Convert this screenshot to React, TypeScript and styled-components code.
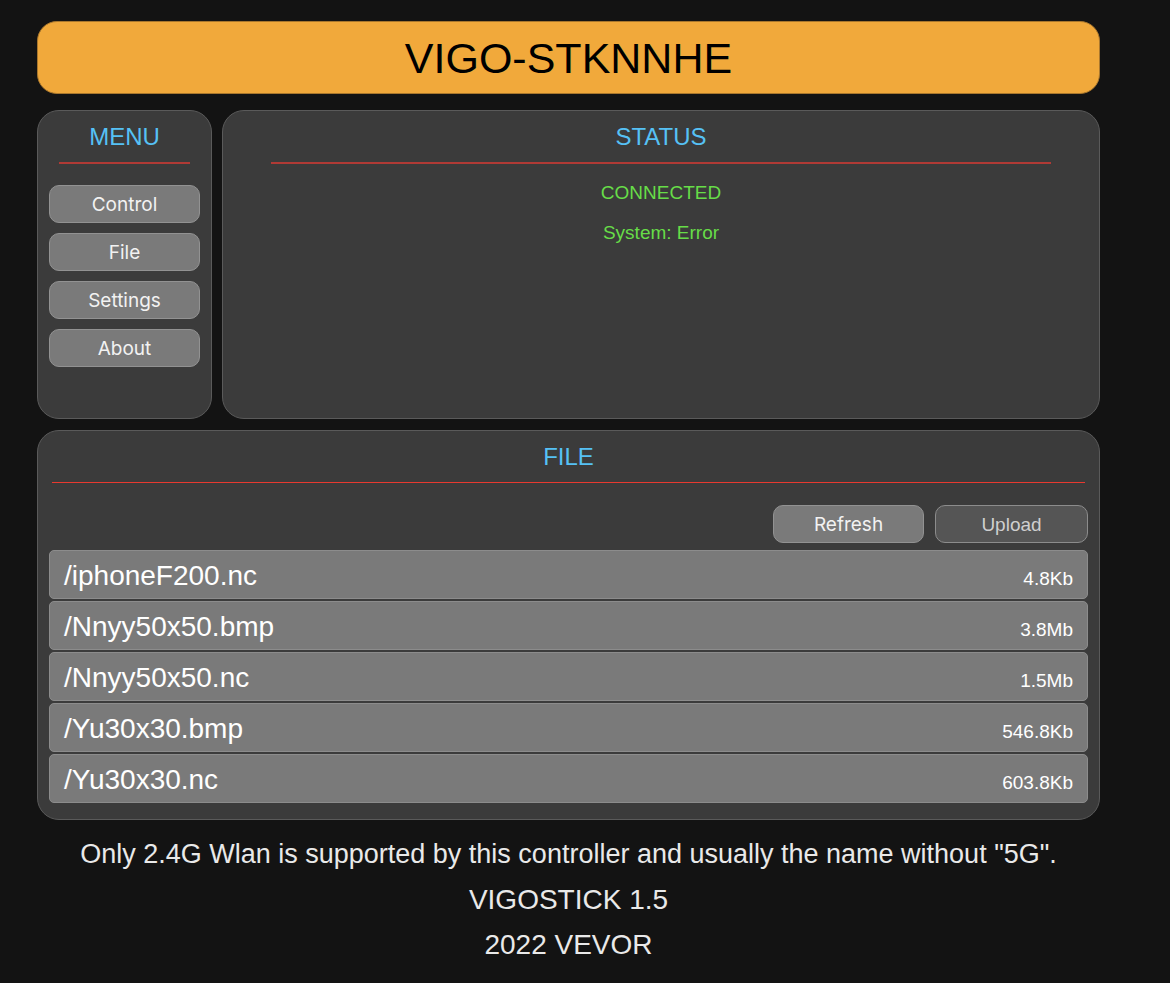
import React from "react";
import styled, { createGlobalStyle } from "styled-components";

const GlobalStyle = createGlobalStyle`
  *, *::before, *::after { box-sizing: border-box; }
  body {
    margin: 0;
    background: #131313;
    color: #e9e9e9;
    font-family: "Liberation Sans", Arial, sans-serif;
  }
  h1, h2, p, ul { margin: 0; padding: 0; font-weight: 400; }
`;

const Page = styled.div`
  display: flex;
  flex-direction: column;
  padding: 21px 70px 16px 37px;
`;

const Banner = styled.header`
  display: flex;
  align-items: center;
  justify-content: center;
  height: 73px;
  margin-bottom: 16px;
  border: 1px solid #a9772d;
  border-radius: 20px;
  background: #f1a93b;
  color: #000;
`;

const BannerTitle = styled.h1`
  font-size: 43px;
  line-height: 48px;
`;

const TopRow = styled.div`
  display: grid;
  grid-template-columns: 175px minmax(0, 1fr);
  gap: 10px;
  min-height: 309px;
  margin-bottom: 11px;
`;

const Panel = styled.section`
  display: flex;
  flex-direction: column;
  padding: 12px 11px 16px;
  border: 1px solid #5a5a5a;
  border-radius: 22px;
  background: #3b3b3b;
`;

const PanelTitle = styled.h2<{ $inset: number; $strong?: boolean }>`
  margin: 0 ${(p) => p.$inset}px ${(p) => (p.$strong ? 22 : 21)}px;
  padding-bottom: 11px;
  border-bottom: ${(p) => (p.$strong ? "1px solid #e8392f" : "2px solid #b03a35")};
  color: #56c1f5;
  font-size: 24px;
  line-height: 28px;
  text-align: center;
`;

const Menu = styled.nav`
  display: flex;
  flex-direction: column;
  gap: 10px;
`;

const Button = styled.button<{ $dim?: boolean }>`
  width: ${(p) => (p.$dim ? "153px" : "151px")};
  height: 38px;
  padding: 2px 0 0;
  border: 1px solid ${(p) => (p.$dim ? "#8c8c8c" : "#929292")};
  border-radius: 10px;
  background: ${(p) => (p.$dim ? "#555" : "#7a7a7a")};
  color: ${(p) => (p.$dim ? "#cfcfcf" : "#f2f2f2")};
  font-family: ${(p) => (p.$dim ? '"Liberation Sans", Arial' : "Inter")}, sans-serif;
  font-size: 19px;
  line-height: 24px;
  cursor: pointer;
`;

const StatusLine = styled.p`
  margin-bottom: 16px;
  color: #67dd48;
  font-size: 19px;
  line-height: 24px;
  text-align: center;
`;

const StatusBody = styled.div`
  margin-top: -4px;
`;

const Toolbar = styled.div`
  display: flex;
  justify-content: flex-end;
  gap: 11px;
  margin-bottom: 7px;
`;

const FileList = styled.ul`
  display: flex;
  flex-direction: column;
  gap: 2px;
  list-style: none;
`;

const FileRow = styled.button`
  display: flex;
  align-items: baseline;
  justify-content: space-between;
  width: 100%;
  height: 49px;
  padding: 3px 14px 0;
  border: 1px solid #8c8c8c;
  border-radius: 5px;
  background: #7a7a7a;
  color: #fff;
  font-family: inherit;
  cursor: pointer;
`;

const FileName = styled.span`
  font-size: 28px;
  line-height: 44px;
`;

const FileSize = styled.span`
  font-size: 19px;
  line-height: 24px;
`;

const Footer = styled.footer`
  margin-top: 12px;
  text-align: center;
`;

const FooterLine = styled.p<{ $note?: boolean }>`
  font-size: ${(p) => (p.$note ? "27px" : "28px")};
  line-height: 45px;
`;

const menuItems = ["Control", "File", "Settings", "About"];

const files = [
  { name: "/iphoneF200.nc", size: "4.8Kb" },
  { name: "/Nnyy50x50.bmp", size: "3.8Mb" },
  { name: "/Nnyy50x50.nc", size: "1.5Mb" },
  { name: "/Yu30x30.bmp", size: "546.8Kb" },
  { name: "/Yu30x30.nc", size: "603.8Kb" },
];

export default function App() {
  return (
    <>
      <GlobalStyle />
      <Page>
        <Banner>
          <BannerTitle>VIGO-STKNNHE</BannerTitle>
        </Banner>
        <TopRow>
          <Panel>
            <PanelTitle $inset={10}>MENU</PanelTitle>
            <Menu>
              {menuItems.map((item) => (
                <Button key={item} type="button">{item}</Button>
              ))}
            </Menu>
          </Panel>
          <Panel>
            <PanelTitle $inset={37}>STATUS</PanelTitle>
            <StatusBody>
              <StatusLine>CONNECTED</StatusLine>
              <StatusLine>System: Error</StatusLine>
            </StatusBody>
          </Panel>
        </TopRow>
        <Panel>
          <PanelTitle $inset={3} $strong>FILE</PanelTitle>
          <Toolbar>
            <Button type="button">Refresh</Button>
            <Button type="button" $dim>Upload</Button>
          </Toolbar>
          <FileList>
            {files.map((file) => (
              <li key={file.name}>
                <FileRow type="button">
                  <FileName>{file.name}</FileName>
                  <FileSize>{file.size}</FileSize>
                </FileRow>
              </li>
            ))}
          </FileList>
        </Panel>
        <Footer>
          <FooterLine $note>
            Only 2.4G Wlan is supported by this controller and usually the name without "5G".
          </FooterLine>
          <FooterLine>VIGOSTICK 1.5</FooterLine>
          <FooterLine>2022 VEVOR</FooterLine>
        </Footer>
      </Page>
    </>
  );
}
